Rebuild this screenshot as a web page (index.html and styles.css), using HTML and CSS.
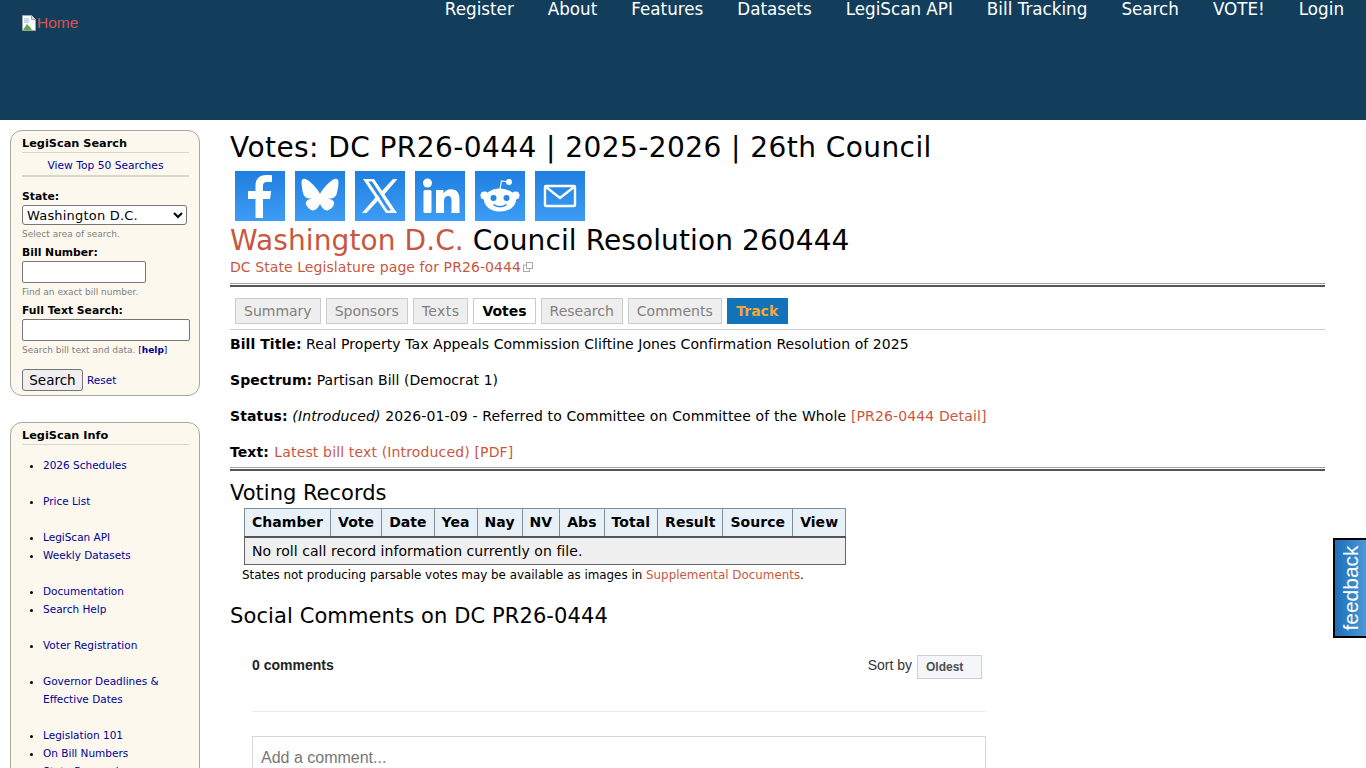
FILE: index.html
```html
<!DOCTYPE html>
<html lang="en">
<head>
  <meta charset="UTF-8">
  <meta name="viewport" content="width=device-width, initial-scale=1">
  <title>Votes: DC PR26-0444 | 2025-2026 | 26th Council</title>
  <link rel="stylesheet" href="styles.css">
</head>
<body>
  <header class="topbar">
    <a class="home" href="#">
      <svg class="broken" viewBox="0 0 16 16" width="16" height="16">
        <path d="M1.500 .5h9l4 4v11h-13z" fill="#fff" stroke="#9aa5ad"/>
        <path d="M10.500 .5v4h4" fill="#dfe6ea" stroke="#9aa5ad"/>
        <path d="M3 3h5v5H3z" fill="#c5d8f5"/>
        <path d="M2 15l4-6 3 3 2 3z" fill="#5fa84f"/>
      </svg>Home
    </a>
    <nav class="topnav">
      <a href="#">Register</a>
      <a href="#">About</a>
      <a href="#">Features</a>
      <a href="#">Datasets</a>
      <a href="#">LegiScan API</a>
      <a href="#">Bill Tracking</a>
      <a href="#">Search</a>
      <a href="#">VOTE!</a>
      <a href="#">Login</a>
    </nav>
  </header>

  <div class="page">
    <aside class="sidebar">
      <section class="box search-box">
        <h3>LegiScan Search</h3>
        <div class="top-link"><a href="#">View Top 50 Searches</a></div>
        <label for="state">State:</label>
        <select id="state" class="state-select">
          <option>Washington D.C.</option>
        </select>
        <div class="hint">Select area of search.</div>
        <label for="billnum">Bill Number:</label>
        <input id="billnum" type="text" class="bill-input">
        <div class="hint">Find an exact bill number.</div>
        <label for="fulltext">Full Text Search:</label>
        <input id="fulltext" type="text" class="text-input">
        <div class="hint">Search bill text and data. <a href="#" class="help">[<b>help</b>]</a></div>
        <div class="search-actions">
          <button type="button" class="search-btn">Search</button>
          <a href="#">Reset</a>
        </div>
      </section>

      <section class="box info-box">
        <h3>LegiScan Info</h3>
        <ul>
          <li class="gap"><a href="#">2026 Schedules</a></li>
          <li class="gap"><a href="#">Price List</a></li>
          <li><a href="#">LegiScan API</a></li>
          <li class="gap"><a href="#">Weekly Datasets</a></li>
          <li><a href="#">Documentation</a></li>
          <li class="gap"><a href="#">Search Help</a></li>
          <li class="gap"><a href="#">Voter Registration</a></li>
          <li class="gap"><a href="#">Governor Deadlines &amp; Effective Dates</a></li>
          <li><a href="#">Legislation 101</a></li>
          <li><a href="#">On Bill Numbers</a></li>
          <li><a href="#">State Research</a></li>
        </ul>
      </section>
    </aside>

    <main class="content">
      <h1>Votes: DC PR26-0444 | 2025-2026 | 26th Council</h1>

      <div class="share">
        <a href="#" class="share-btn" aria-label="Facebook">
          <svg viewBox="0 0 50 50"><path d="M28 47V28h7l1.200-8H28v-5c0-2.400 1-4 4.200-4H37V4.300c-1-.2-3.400-.4-6-.4-6.300 0-10.500 3.800-10.500 10.500V20H13v8h7.500v19z" fill="#fff"/></svg>
        </a>
        <a href="#" class="share-btn" aria-label="Bluesky">
          <svg viewBox="0 0 50 50"><path d="M25 23c-2-4-7.500-11-12.500-14C9 7 6.500 7.500 6.500 11.500c0 2 1 9.500 2 12 1.500 3.500 5.500 4.500 9 4-5.500 1-9 3.500-5 8.500 4.500 5.500 9 4.500 12.500-3 3.500 7.500 8 8.500 12.500 3 4-5 .5-7.500-5-8.500 3.500.5 7.500-.5 9-4 1-2.500 2-10 2-12C43.500 7.500 41 7 37.500 9 32.500 12 27 19 25 23z" fill="#fff"/></svg>
        </a>
        <a href="#" class="share-btn" aria-label="X">
          <svg viewBox="0 0 50 50"><path d="M8 8h11l23 34H31zM13.500 10.500l19 29h3.500l-19-29z" fill="#fff" fill-rule="evenodd"/><path d="M38 8h4.500L28 25l-2.500-3.500zM11.500 42H7l15.500-18 2.500 3.500z" fill="#fff"/></svg>
        </a>
        <a href="#" class="share-btn" aria-label="LinkedIn">
          <svg viewBox="0 0 50 50"><circle cx="12.500" cy="12" r="4.500" fill="#fff"/><rect x="8.500" y="19" width="8" height="23" rx="1.500" fill="#fff"/><path d="M21 19h7.500v3.500c1.500-2.500 4-4.200 7.500-4.200 6 0 8.500 4 8.500 10V42h-8V29.500c0-3-1-4.500-3.300-4.500-2.500 0-4.200 1.800-4.200 4.800V42h-8z" fill="#fff"/></svg>
        </a>
        <a href="#" class="share-btn" aria-label="Reddit">
          <svg viewBox="0 0 50 50"><ellipse cx="25" cy="29" rx="16" ry="11.500" fill="#fff"/><circle cx="9.500" cy="24.500" r="4" fill="#fff"/><circle cx="40.500" cy="24.500" r="4" fill="#fff"/><circle cx="34" cy="11" r="3" fill="#fff"/><path d="M25 18l1.500-8 7 1" fill="none" stroke="#fff" stroke-width="1.200"/><circle cx="18.500" cy="27" r="3" fill="#2587e6"/><circle cx="31.500" cy="27" r="3" fill="#2587e6"/><path d="M18.500 33.500c3.500 3 9.500 3 13 0" fill="none" stroke="#2587e6" stroke-width="1.600"/></svg>
        </a>
        <a href="#" class="share-btn" aria-label="Email">
          <svg viewBox="0 0 50 50"><rect x="10" y="15" width="30" height="20" rx="1" fill="none" stroke="#fff" stroke-width="2.400"/><path d="M11 16l14 11 14-11" fill="none" stroke="#fff" stroke-width="2.400"/></svg>
        </a>
      </div>

      <h2 class="bill-heading"><a href="#">Washington D.C.</a> Council Resolution 260444</h2>
      <div class="state-link">
        <a href="#">DC State Legislature page for PR26-0444<svg class="ext" viewBox="0 0 10 10" width="10" height="10"><rect x=".5" y="3" width="6" height="6.500" fill="none" stroke="#a9a9a9"/><rect x="3.500" y=".5" width="6" height="6" fill="#fff" stroke="#a9a9a9"/></svg></a>
      </div>

      <hr class="rule">

      <div class="tabs">
        <a href="#" class="tab">Summary</a>
        <a href="#" class="tab">Sponsors</a>
        <a href="#" class="tab tab-texts">Texts</a>
        <a href="#" class="tab active">Votes</a>
        <a href="#" class="tab">Research</a>
        <a href="#" class="tab">Comments</a>
        <a href="#" class="tab track">Track</a>
      </div>

      <div class="facts">
        <p><b>Bill Title:</b> Real Property Tax Appeals Commission Cliftine Jones Confirmation Resolution of 2025</p>
        <p><b>Spectrum:</b> Partisan Bill (Democrat 1)</p>
        <p class="status"><b>Status:</b> <i>(Introduced)</i> 2026-01-09 - Referred to Committee on Committee of the Whole <a href="#">[PR26-0444 Detail]</a></p>
        <p class="latest"><b>Text:</b> <a href="#">Latest bill text (Introduced) [PDF]</a></p>
      </div>

      <hr class="rule rule-low">

      <h2 class="section-title">Voting Records</h2>
      <table class="votes">
        <thead>
          <tr>
            <th>Chamber</th><th>Vote</th><th>Date</th><th>Yea</th><th>Nay</th><th>NV</th>
            <th>Abs</th><th>Total</th><th>Result</th><th>Source</th><th>View</th>
          </tr>
        </thead>
        <tbody>
          <tr><td colspan="11">No roll call record information currently on file.</td></tr>
        </tbody>
      </table>
      <p class="note">States not producing parsable votes may be available as images in <a href="#">Supplemental Documents</a>.</p>

      <h2 class="section-title comments-title">Social Comments on DC PR26-0444</h2>

      <div class="comments">
        <div class="comments-head">
          <b>0 comments</b>
          <div class="sort">Sort by <span class="sort-btn">Oldest</span></div>
        </div>
        <div class="comment-box">Add a comment...</div>
      </div>
    </main>
  </div>

  <a href="#" class="feedback"><span>feedback</span></a>
</body>
</html>
```

FILE: styles.css
```css
body {
  margin: 0;
  font-family: "DejaVu Sans", Verdana, sans-serif;
  font-size: 14px;
  color: #000;
  background-color: #fff;
}

a {
  color: #c9573f;
  text-decoration: none;
}

/* top bar */
.topbar {
  height: 120px;
  background-color: #123e5c;
  display: flex;
  justify-content: space-between;
  align-items: flex-start;
}

.home {
  font-family: "Liberation Sans", Arial, sans-serif;
  font-size: 15.5px;
  margin: 14px 0 0 21px;
  display: flex;
  align-items: center;
  color: #d9534f;
}

.broken {
  flex: none;
}

.topnav {
  display: flex;
  gap: 34px;
  padding-right: 22px;
}

.topnav a {
  color: #fff;
  font-size: 16.75px;
  line-height: 19px;
}

/* layout */
.page {
  display: flex;
  padding: 10px 41px 0 10px;
  gap: 30px;
}

.sidebar {
  flex: none;
  width: 190px;
}

.content {
  flex: 1;
  min-width: 0;
}

/* sidebar boxes */
.box {
  border: 1px solid #a8a8a0;
  border-radius: 12px;
  background-color: #fdf8ee;
  box-sizing: border-box;
  padding: 5px 10px 4px 11px;
  font-size: 10.5px;
}

.box a {
  color: #000099;
}

.box h3 {
  margin: 0;
  font-size: 11.3px;
  line-height: 15px;
  padding-bottom: 1px;
  border-bottom: 1px solid #d8d8d0;
}

.search-box {
  height: 266px;
  margin-bottom: 26px;
}

.top-link {
  text-align: center;
  font-size: 10.7px;
  line-height: 18px;
  padding-top: 4px;
  border-bottom: 2px solid #d8d8d0;
  margin-bottom: 13px;
}

.box label {
  display: block;
  font-weight: bold;
  font-size: 10.8px;
  line-height: 14px;
  margin-bottom: 1px;
}

.state-select {
  display: block;
  width: 165px;
  height: 20px;
  margin: 0;
  padding: 0;
  font-family: inherit;
  font-size: 13px;
  letter-spacing: .2px;
  border: 1px solid #767676;
  border-radius: 3px;
  background-color: #fff;
}

.bill-input,
.text-input {
  display: block;
  box-sizing: border-box;
  height: 22px;
  margin: 0;
  border: 1px solid #767676;
  border-radius: 2px;
  background-color: #fff;
}

.bill-input {
  width: 124px;
}

.text-input {
  width: 168px;
}

.hint {
  font-size: 9px;
  line-height: 12px;
  margin: 3px 0 6px;
  color: #808080;
}

.search-box .help {
  color: #000099;
}

.search-actions {
  display: flex;
  align-items: center;
  gap: 4px;
  margin-top: 13px;
}

.search-btn {
  width: 61px;
  height: 22px;
  padding: 0;
  font-family: inherit;
  font-size: 13.5px;
  border: 1px solid #767676;
  border-radius: 3px;
  background-color: #efefef;
}

.info-box {
  height: 420px;
}

.info-box ul {
  margin: 11px 0 0;
  padding-left: 21px;
}

.info-box li {
  line-height: 18px;
}

.info-box li.gap {
  margin-bottom: 18px;
}

/* main column */
h1 {
  margin: 1px 0 0;
  font-size: 28px;
  font-weight: normal;
  line-height: 34px;
  letter-spacing: .43px;
}

.share {
  display: flex;
  gap: 10px;
  padding: 6px 0 0 5px;
}

.share-btn {
  display: block;
  width: 50px;
  height: 50px;
  background: linear-gradient(#1f7fe0, #3d9cf5);
}

.share-btn svg {
  display: block;
  width: 50px;
  height: 50px;
}

.bill-heading {
  margin: 3px 0 0;
  font-size: 28px;
  font-weight: normal;
  line-height: 34px;
  letter-spacing: .1px;
}

.state-link {
  font-size: 14px;
  line-height: 18px;
  letter-spacing: .08px;
}

.ext {
  margin-left: 2px;
}

.rule {
  margin: 7px 0 0;
  border: 0;
  border-top: 1px solid #a0a0a0;
  border-bottom: 2px solid #555;
  box-sizing: border-box;
  height: 4px;
}

.rule.rule-low {
  margin-top: 6px;
}

.tabs {
  display: flex;
  gap: 5px;
  padding: 11px 0 5px 5px;
  border-bottom: 1px solid #ccc;
}

.tab {
  border: 1px solid #ccc;
  background-color: #eee;
  color: #808080;
  font-size: 14px;
  line-height: 24px;
  padding: 0 8px;
}

.tab-texts {
  letter-spacing: .4px;
}

.tab.active {
  background-color: #fff;
  color: #000;
  font-weight: bold;
}

.tab.track {
  background-color: #1273bb;
  border-color: #1273bb;
  color: #f5a733;
  font-weight: bold;
  padding: 0 8.5px;
}

.facts {
  padding-top: 5px;
  letter-spacing: .06px;
}

.facts p {
  margin: 0 0 18px;
  line-height: 18px;
}

.facts p:last-child {
  margin-bottom: 0;
}

.facts .status {
  letter-spacing: .13px;
}

.facts .latest a {
  margin-left: 1px;
  letter-spacing: .15px;
}

.section-title {
  margin: 0;
  font-size: 21px;
  font-weight: normal;
  line-height: 24px;
}

.rule-low + .section-title {
  margin-top: 10px;
}

.votes {
  margin: 3px 0 0 14px;
  border-collapse: collapse;
  border: 1px solid #666;
  font-size: 14px;
}

.votes th {
  padding: 0 7px 2px;
  height: 25px;
  border: 1px solid #7f8f9a;
  border-bottom: 2px solid #555;
  background-color: #e8f1f8;
  white-space: nowrap;
  letter-spacing: .05px;
}

.votes td {
  padding: 0 7px;
  height: 26px;
  background-color: #f0f0f0;
  letter-spacing: .06px;
}

.note {
  margin: 1px 0 0 12px;
  font-size: 11.9px;
  line-height: 18px;
}

.section-title.comments-title {
  margin-top: 20px;
  letter-spacing: .1px;
}

.comments {
  width: 734px;
  margin: 29px 0 0 22px;
  font-family: "Liberation Sans", Arial, sans-serif;
  font-size: 14px;
  color: #333;
}

.comments-head {
  display: flex;
  justify-content: space-between;
  align-items: flex-start;
  height: 54px;
  border-bottom: 1px solid #e9ebee;
  margin-bottom: 24px;
}

.comments-head b {
  color: #222;
}

.sort {
  display: flex;
  align-items: flex-start;
  gap: 5px;
  margin-right: 4px;
}

.sort-btn {
  box-sizing: border-box;
  width: 65px;
  height: 24px;
  margin-top: -2px;
  border: 1px solid #ccd0d5;
  background-color: #f5f6f7;
  font-size: 12px;
  font-weight: bold;
  line-height: 22px;
  padding-left: 8px;
  color: #4b4f56;
}

.comment-box {
  border: 1px solid #d3d6db;
  height: 80px;
  box-sizing: border-box;
  padding: 12px 8px;
  font-size: 16px;
  color: #777;
}

/* feedback tab */
.feedback {
  position: fixed;
  right: 0;
  top: 538px;
  width: 33px;
  height: 100px;
  box-sizing: border-box;
  border: 2px solid #000;
  border-right: 0;
  outline: 1px solid #fff;
  background: linear-gradient(to right, #1d6fb8, #4b98d8);
  display: flex;
  align-items: center;
  justify-content: center;
}

.feedback span {
  font-family: "Liberation Sans", Arial, sans-serif;
  font-size: 21px;
  color: #fff;
  transform: rotate(-90deg);
  white-space: nowrap;
}
```
